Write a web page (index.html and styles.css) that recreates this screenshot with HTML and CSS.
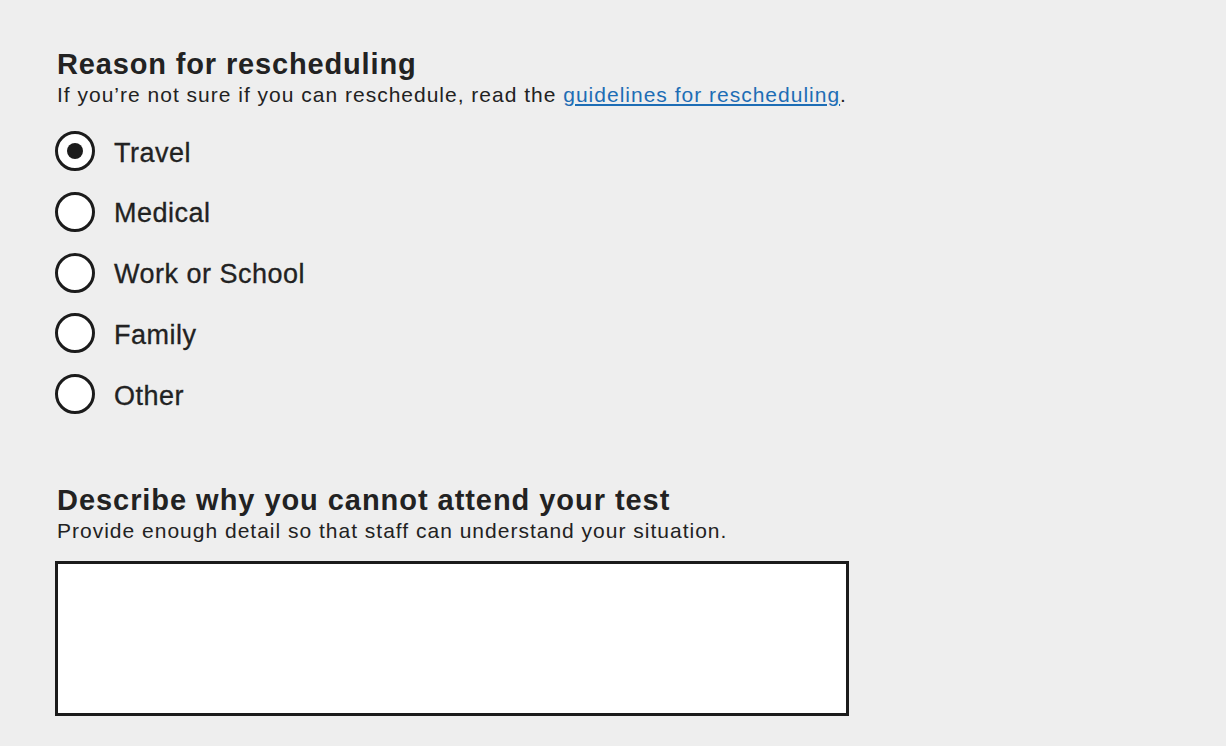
FILE: index.html
```html
<!DOCTYPE html>
<html lang="en">
<head>
<meta charset="utf-8">
<title>Reschedule</title>
<link rel="stylesheet" href="styles.css">
</head>
<body>
<main class="page">
  <fieldset class="group">
    <legend class="heading">Reason for rescheduling</legend>
    <p class="hint">If you’re not sure if you can reschedule, read the <a href="#" class="link">guidelines for rescheduling</a>.</p>
    <div class="options">
      <label class="option"><span class="radio checked"></span><span class="label">Travel</span></label>
      <label class="option"><span class="radio"></span><span class="label">Medical</span></label>
      <label class="option"><span class="radio"></span><span class="label">Work or School</span></label>
      <label class="option"><span class="radio"></span><span class="label">Family</span></label>
      <label class="option"><span class="radio"></span><span class="label">Other</span></label>
    </div>
  </fieldset>
  <div class="group second">
    <h2 class="heading wide">Describe why you cannot attend your test</h2>
    <p class="hint">Provide enough detail so that staff can understand your situation.</p>
    <div class="textarea"></div>
  </div>
</main>
</body>
</html>
```
FILE: styles.css
```css
html, body {
  margin: 0;
  padding: 0;
  background: #eeeeee;
}
body {
  font-family: "Liberation Sans", Arial, Helvetica, sans-serif;
  color: #222222;
}
.page {
  padding: 46px 0 0 57px;
}
.group {
  border: 0;
  margin: 0;
  padding: 0;
}
.heading {
  display: block;
  margin: 0;
  padding: 0;
  font-size: 29px;
  font-weight: bold;
  line-height: 36px;
  letter-spacing: 0.85px;
}
.heading.wide {
  letter-spacing: 0.95px;
}
.hint {
  margin: 0;
  font-size: 21px;
  line-height: 26px;
  letter-spacing: 1px;
}
.link {
  color: #1d6db5;
}
.options {
  display: flex;
  flex-direction: column;
  gap: 20.75px;
  margin-top: 23px;
  margin-left: -2px;
}
.option {
  display: flex;
  align-items: center;
  gap: 19px;
  height: 40px;
}
.radio {
  box-sizing: border-box;
  flex: none;
  width: 40px;
  height: 40px;
  border: 3px solid #1b1b1b;
  border-radius: 50%;
  background: #ffffff;
  display: flex;
  align-items: center;
  justify-content: center;
}
.radio.checked::after {
  content: "";
  width: 16px;
  height: 16px;
  border-radius: 50%;
  background: #1b1b1b;
}
.label {
  font-size: 27px;
  line-height: 30px;
  letter-spacing: 0.5px;
  -webkit-text-stroke: 0.3px #222222;
  padding-top: 3px;
}
.second {
  margin-top: 68px;
}
.textarea {
  box-sizing: border-box;
  margin-top: 17px;
  margin-left: -2px;
  width: 794px;
  height: 155px;
  border: 3px solid #1b1b1b;
  background: #ffffff;
}
```
